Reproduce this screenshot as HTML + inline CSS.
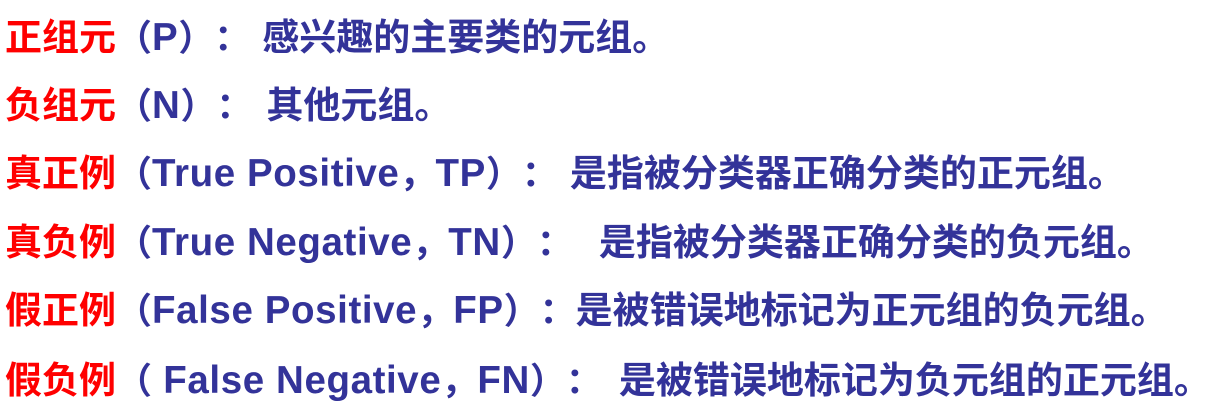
<!DOCTYPE html>
<html><head><meta charset="utf-8"><style>
body{margin:0;width:1217px;height:401px;background:#fff;overflow:hidden;position:relative;font-family:"Liberation Sans","Noto Sans CJK SC",sans-serif;font-weight:bold;font-size:37px;}
.l{position:absolute;left:5px;white-space:nowrap;line-height:40px;color:#333399;}
.r{color:#ff0000;}
.e{font-size:38.5px;letter-spacing:0.6px;}
.o,.c,.m,.k{display:inline-block;width:36px;font-family:"Noto Sans CJK SC",sans-serif;font-size:36px;}
.o{text-align:right;}
.c,.k{text-align:left;}
.m{text-align:center;margin-right:15px;}
</style></head><body>
<div class="l" style="top:15px"><span class="r">正组元</span><span class="o">（</span><span class="e">P</span><span class="c">）</span><span class="m" style="margin-right:12px">：</span>感兴趣的主要类的元组。</div>
<div class="l" style="top:83px"><span class="r">负组元</span><span class="o">（</span><span class="e">N</span><span class="c">）</span><span class="m" style="margin-right:14px">：</span>其他元组。</div>
<div class="l" style="top:151px"><span class="r">真正例</span><span class="o">（</span><span class="e">True Positive</span><span class="k">，</span><span class="e">TP</span><span class="c">）</span><span class="m" style="margin-right:12px">：</span>是指被分类器正确分类的正元组。</div>
<div class="l" style="top:220px"><span class="r">真负例</span><span class="o">（</span><span class="e">True Negative</span><span class="k">，</span><span class="e">TN</span><span class="c">）</span><span class="m" style="margin-right:26px">：</span>是指被分类器正确分类的负元组。</div>
<div class="l" style="top:288px"><span class="r">假正例</span><span class="o">（</span><span class="e">False Positive</span><span class="k">，</span><span class="e">FP</span><span class="c">）</span><span class="m" style="margin-right:0px">：</span>是被错误地标记为正元组的负元组。</div>
<div class="l" style="top:358px"><span class="r">假负例</span><span class="o">（</span><span class="e"> False Negative</span><span class="k">，</span><span class="e">FN</span><span class="c">）</span><span class="m" style="margin-right:17px">：</span>是被错误地标记为负元组的正元组。</div>
</body></html>
